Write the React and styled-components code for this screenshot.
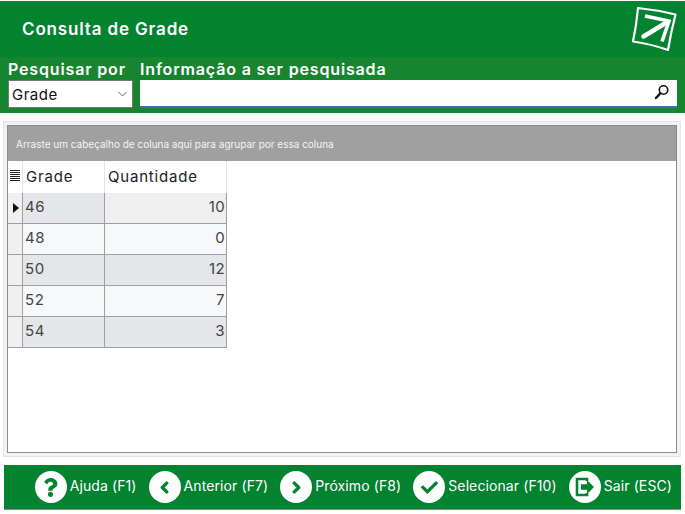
import React from 'react'
import styled, { createGlobalStyle } from 'styled-components'
import { FaQuestion, FaChevronLeft, FaChevronRight, FaCheck } from 'react-icons/fa'

const GlobalStyle = createGlobalStyle`
  html, body { margin: 0; padding: 0; background: #fff; }
  body { font-family: "Inter", "Open Sans", sans-serif; }
`

const linhas = [
  { grade: '46', qtd: 10 },
  { grade: '48', qtd: 0 },
  { grade: '50', qtd: 12 },
  { grade: '52', qtd: 7 },
  { grade: '54', qtd: 3 },
]

function ExitIcon() {
  return (
    <svg width="22" height="22" viewBox="0 0 22 22" fill="none">
      <path d="M13 5V3H3v16h10v-2" stroke="#038230" strokeWidth="2.6" />
      <path d="M7 8.2h6V4l7 7-7 7v-4.2H7z" fill="#038230" />
    </svg>
  )
}

function Logo() {
  return (
    <svg width="46" height="46" viewBox="0 0 46 46" fill="none">
      <path d="M7 2 Q26 4 44.5 8.5 Q40 26 37 44 Q20 38 2 35.5 Q5.5 19 7 2Z" stroke="#fff" strokeWidth="2.2" strokeLinejoin="round" />
      <path d="M12.5 30.5 L35.5 16.5" stroke="#fff" strokeWidth="4.4" strokeLinecap="round" />
      <path d="M14 10 L38 15 L31 35.5" stroke="#fff" strokeWidth="3.6" />
    </svg>
  )
}

function Lupa() {
  return (
    <svg width="16" height="16" viewBox="0 0 16 16" fill="none">
      <circle cx="9.5" cy="6" r="4.2" stroke="#111" strokeWidth="1.6" />
      <path d="M6.4 9.2 L2 14" stroke="#111" strokeWidth="2.4" strokeLinecap="round" />
    </svg>
  )
}

function ListaIcon() {
  return (
    <svg width="10" height="11" viewBox="0 0 10 11" shapeRendering="crispEdges">
      <path d="M0 .5h10M0 2.5h10M0 4.5h10M0 6.5h10M0 8.5h10M0 10.5h10" stroke="#222" strokeWidth="1" />
    </svg>
  )
}

export default function App() {
  return (
    <Page>
      <GlobalStyle />
      <Header>
        <Title>Consulta de Grade</Title>
        <Logo />
      </Header>
      <FilterBar>
        <FieldGrade>
          <FieldLabel>Pesquisar por</FieldLabel>
          <SelectBox>
            <span>Grade</span>
            <svg width="9" height="6" viewBox="0 0 9 6" fill="none">
              <path d="M.5 1l4 4 4-4" stroke="#666" strokeWidth="1" />
            </svg>
          </SelectBox>
        </FieldGrade>
        <FieldInfo>
          <FieldLabel>Informação a ser pesquisada</FieldLabel>
          <SearchBox>
            <Lupa />
          </SearchBox>
        </FieldInfo>
      </FilterBar>

      <GridOuter>
        <GridPanel>
          <GroupBar>Arraste um cabeçalho de coluna aqui para agrupar por essa coluna</GroupBar>
          <HeadRow>
            <HeadIndicator>
              <ListaIcon />
            </HeadIndicator>
            <HeadCell $width={82}>Grade</HeadCell>
            <HeadCell $width={122}>Quantidade</HeadCell>
          </HeadRow>
          {linhas.map((l, i) => (
            <Row key={l.grade}>
              <Indicator>{i === 0 && <Arrow />}</Indicator>
              <GradeCell $odd={i % 2 === 0}>{l.grade}</GradeCell>
              <QtdCell $odd={i % 2 === 0} $current={i === 0}>{l.qtd}</QtdCell>
            </Row>
          ))}
        </GridPanel>
      </GridOuter>

      <Footer>
        <FooterBtn>
          <Circle><FaQuestion size={19} /></Circle>
          <BtnLabel>Ajuda (F1)</BtnLabel>
        </FooterBtn>
        <FooterBtn>
          <Circle><FaChevronLeft size={13} stroke="currentColor" strokeWidth={50} /></Circle>
          <BtnLabel>Anterior (F7)</BtnLabel>
        </FooterBtn>
        <FooterBtn>
          <Circle><FaChevronRight size={13} stroke="currentColor" strokeWidth={50} /></Circle>
          <BtnLabel>Próximo (F8)</BtnLabel>
        </FooterBtn>
        <FooterBtn>
          <Circle><FaCheck size={17} /></Circle>
          <BtnLabel>Selecionar (F10)</BtnLabel>
        </FooterBtn>
        <FooterBtn>
          <Circle><ExitIcon /></Circle>
          <BtnLabel>Sair (ESC)</BtnLabel>
        </FooterBtn>
      </Footer>
    </Page>
  )
}

const Page = styled.div`
  width: 685px;
  height: 514px;
  overflow: hidden;
  padding-top: 1px;
  box-sizing: border-box;
`

const Header = styled.div`
  height: 56px;
  background: #038230;
  display: flex;
  align-items: center;
  justify-content: space-between;
  padding: 0 8px 0 22px;
`

const Title = styled.div`
  color: #fff;
  font-size: 17px;
  font-weight: 600;
  letter-spacing: 0.85px;
`

const FilterBar = styled.div`
  height: 56px;
  background: #17852f;
  display: flex;
  gap: 7px;
  padding: 3px 8px 0;
  box-sizing: border-box;
`

const FieldGrade = styled.div`
  width: 125px;
`

const FieldInfo = styled.div`
  flex: 1;
`

const FieldLabel = styled.div`
  color: #fff;
  font-size: 16px;
  font-weight: 600;
  line-height: 18px;
  letter-spacing: 0.85px;
  white-space: nowrap;
`

const SelectBox = styled.div`
  height: 28px;
  margin-top: 2px;
  box-sizing: border-box;
  background: #fff;
  border: 1px solid #777;
  display: flex;
  align-items: center;
  justify-content: space-between;
  padding: 0 5px 0 3px;
  font-size: 15px;
  letter-spacing: 0.5px;
  color: #111;
`

const SearchBox = styled.div`
  height: 28px;
  margin-top: 2px;
  box-sizing: border-box;
  background: #fff;
  border-bottom: 2px solid #3b6fb5;
  display: flex;
  align-items: center;
  justify-content: flex-end;
  padding: 0 7px 3px 0;
`

const GridOuter = styled.div`
  margin: 8px 4px 0 3px;
  height: 336px;
  box-sizing: border-box;
  padding: 3px;
  background: #f2f2f2;
  border: 1px solid #e4e4e4;
`

const GridPanel = styled.div`
  height: 100%;
  box-sizing: border-box;
  background: #fff;
  border: 1px solid #8a8a8a;
`

const GroupBar = styled.div`
  height: 35px;
  background: #a0a0a0;
  color: #f4f4f4;
  font-size: 10px;
  display: flex;
  align-items: center;
  padding: 1px 0 0 8px;
  box-sizing: border-box;
`

const HeadRow = styled.div`
  display: flex;
  height: 32px;
`

const HeadIndicator = styled.div`
  width: 15px;
  display: flex;
  align-items: center;
  justify-content: center;
  padding-bottom: 3px;
  box-sizing: border-box;
  border-right: 1px solid #e4e4e4;
`

const HeadCell = styled.div`
  width: ${p => p.$width}px;
  box-sizing: border-box;
  border-right: 1px solid #e4e4e4;
  display: flex;
  align-items: center;
  padding: 0 0 2px 3px;
  font-size: 15px;
  letter-spacing: 0.8px;
  color: #222;
`

const Row = styled.div`
  display: flex;
  height: 31px;
`

const Indicator = styled.div`
  width: 15px;
  box-sizing: border-box;
  background: #f0f0f0;
  border-right: 1px solid #a0a0a0;
  border-bottom: 1px solid #a0a0a0;
  display: flex;
  align-items: center;
  justify-content: center;
  padding-left: 1px;
`

const Arrow = styled.div`
  width: 0;
  height: 0;
  border-left: 6px solid #111;
  border-top: 5px solid transparent;
  border-bottom: 5px solid transparent;
`

const GradeCell = styled.div`
  width: 82px;
  box-sizing: border-box;
  background: ${p => (p.$odd ? '#e5e6ea' : '#f7f8fa')};
  border-right: 1px solid #a0a0a0;
  border-bottom: 1px solid #a0a0a0;
  display: flex;
  align-items: center;
  padding: 0 0 3px 2px;
  font-size: 15px;
  letter-spacing: 0.6px;
  color: #444;
`

const QtdCell = styled.div`
  width: 122px;
  box-sizing: border-box;
  background: ${p => (p.$current ? '#efefef' : p.$odd ? '#e5e6ea' : '#f7f8fa')};
  border-right: 1px solid #a0a0a0;
  border-bottom: 1px solid #a0a0a0;
  display: flex;
  align-items: center;
  justify-content: flex-end;
  padding: 0 1px 3px 0;
  font-size: 15px;
  letter-spacing: 0.4px;
  color: #444;
`

const Footer = styled.div`
  margin: 8px 4px 0 4px;
  height: 45px;
  box-sizing: border-box;
  background: #038230;
  border-bottom: 1px solid #888;
  display: flex;
  align-items: center;
  justify-content: flex-end;
  gap: 12px;
  padding-right: 9px;
`

const FooterBtn = styled.div`
  display: flex;
  align-items: center;
  gap: 3px;
  color: #fff;
  font-size: 14px;
  letter-spacing: 0.1px;
  white-space: nowrap;
`

const BtnLabel = styled.span`
  margin-bottom: 3px;
`

const Circle = styled.div`
  width: 32px;
  height: 32px;
  border-radius: 50%;
  background: #fff;
  color: #038230;
  display: flex;
  align-items: center;
  justify-content: center;
`
